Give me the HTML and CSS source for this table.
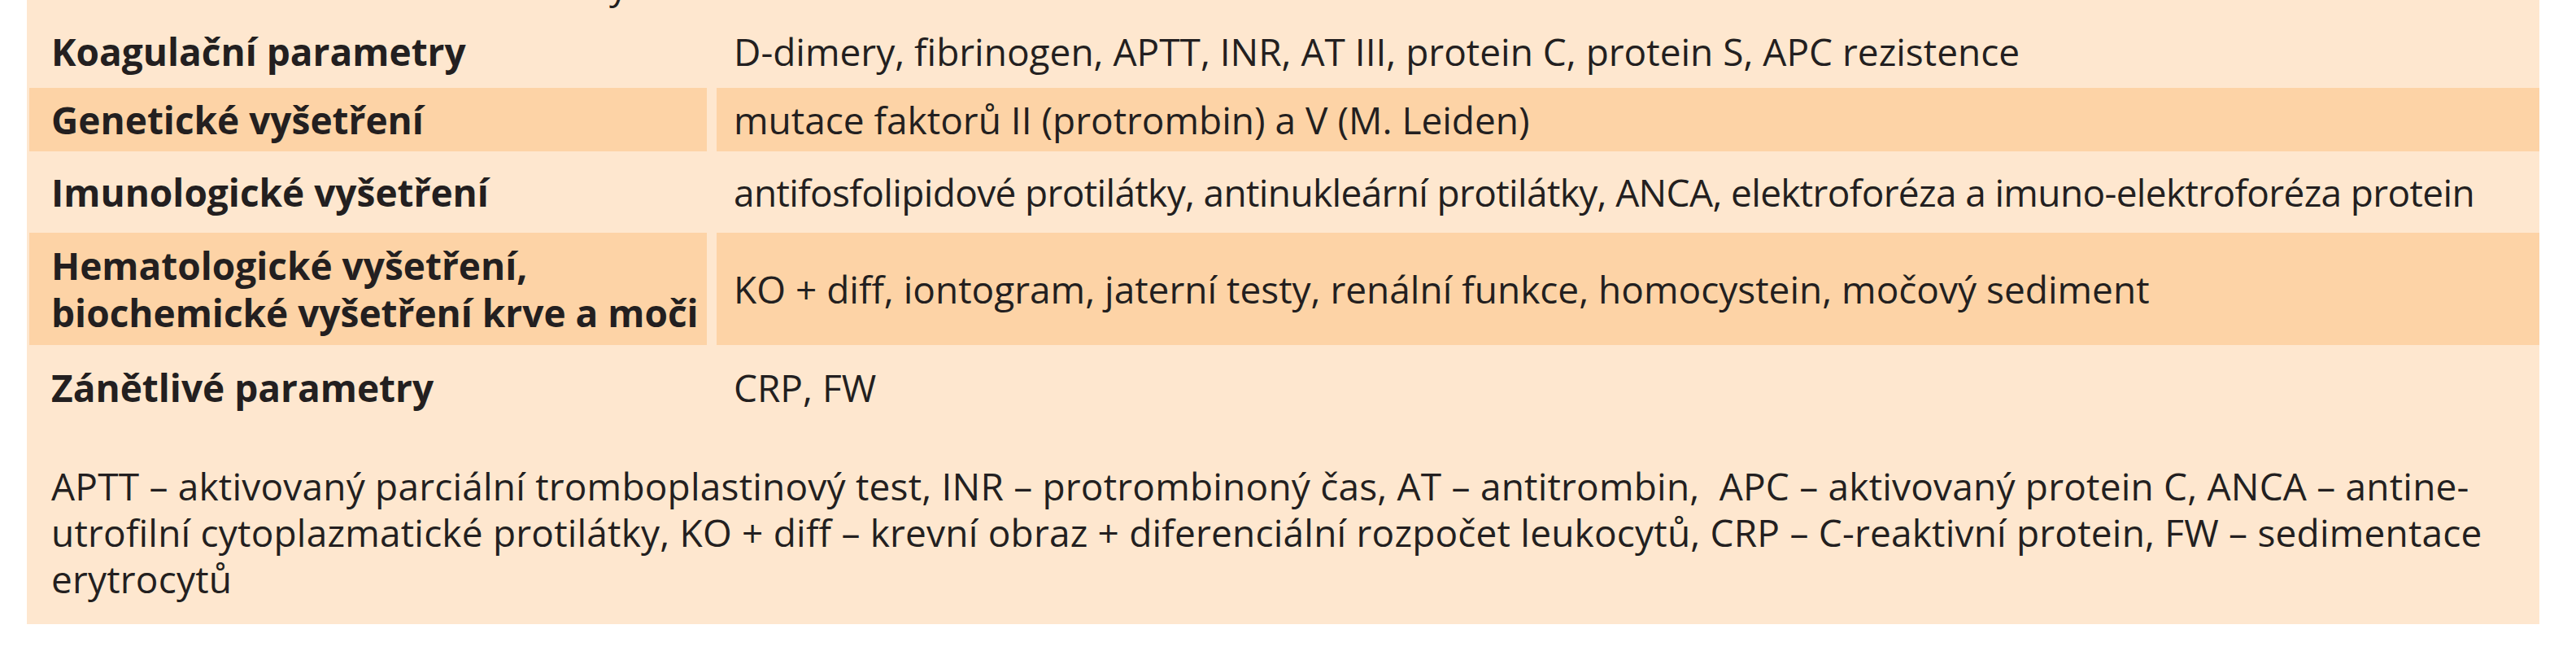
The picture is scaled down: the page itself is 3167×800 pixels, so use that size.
FILE: index.html
```html
<!DOCTYPE html>
<html lang="cs">
<head>
<meta charset="utf-8">
<title>Tabulka</title>
<link rel="stylesheet" href="styles.css">
</head>
<body>
<div class="panel">
  <div class="caption"><div class="caption-line">y</div></div>
  <div class="row row-1">
    <div class="cell head">Koagulační parametry</div>
    <div class="cell val">D-dimery, fibrinogen, APTT, INR, AT III, protein C, protein S, APC rezistence</div>
  </div>
  <div class="row row-2 dark">
    <div class="cell head">Genetické vyšetření</div>
    <div class="cell val">mutace faktorů II (protrombin) a V (M. Leiden)</div>
  </div>
  <div class="row row-3">
    <div class="cell head">Imunologické vyšetření</div>
    <div class="cell val val-tight">antifosfolipidové protilátky, antinukleární protilátky, ANCA, elektroforéza a imuno-elektroforéza protein</div>
  </div>
  <div class="row row-4 dark">
    <div class="cell head">Hematologické vyšetření,<br>biochemické vyšetření krve a moči</div>
    <div class="cell val">KO + diff, iontogram, jaterní testy, renální funkce, homocystein, močový sediment</div>
  </div>
  <div class="row row-5">
    <div class="cell head">Zánětlivé parametry</div>
    <div class="cell val">CRP, FW</div>
  </div>
  <p class="note">APTT – aktivovaný parciální tromboplastinový test, INR – protrombinoný čas, AT – antitrombin,&nbsp; APC – aktivovaný protein C, ANCA – antine-<br>utrofilní cytoplazmatické protilátky, KO + diff – krevní obraz + diferenciální rozpočet leukocytů, CRP – C-reaktivní protein, FW – sedimentace<br>erytrocytů</p>
</div>
</body>
</html>
```
FILE: styles.css
```css
html, body {
  margin: 0;
  padding: 0;
  background: #ffffff;
}

body {
  font-family: "Open Sans", "Noto Sans", sans-serif;
  font-size: 46px;
  color: #231f20;
  width: 3167px;
}

.panel {
  margin-left: 33px;
  width: 3089px;
  height: 767px;
  background: #fee7cf;
  overflow: hidden;
}

.caption {
  height: 18px;
  padding-left: 716px;
  overflow: hidden;
}

.caption-line {
  margin-top: -48px;
  line-height: 58px;
}

.row {
  display: grid;
  grid-template-columns: 833px 1fr;
  column-gap: 12px;
  margin-left: 3px;
}

.row-1 { height: 90px; }
.row-2 { height: 78px; }
.row-3 { height: 100px; }
.row-4 { height: 138px; }
.row-5 { height: 104px; }

.cell {
  display: flex;
  align-items: center;
  line-height: 58px;
  white-space: nowrap;
}

.dark .cell {
  background: #fdd3a6;
}

.head {
  padding-left: 27px;
  font-weight: 700;
}

.val {
  padding-left: 21px;
}

.val-tight {
  letter-spacing: -0.64px;
}

.note {
  margin: 0;
  padding: 41px 0 0 30px;
  line-height: 57px;
  letter-spacing: 0.2px;
  white-space: nowrap;
}
```
